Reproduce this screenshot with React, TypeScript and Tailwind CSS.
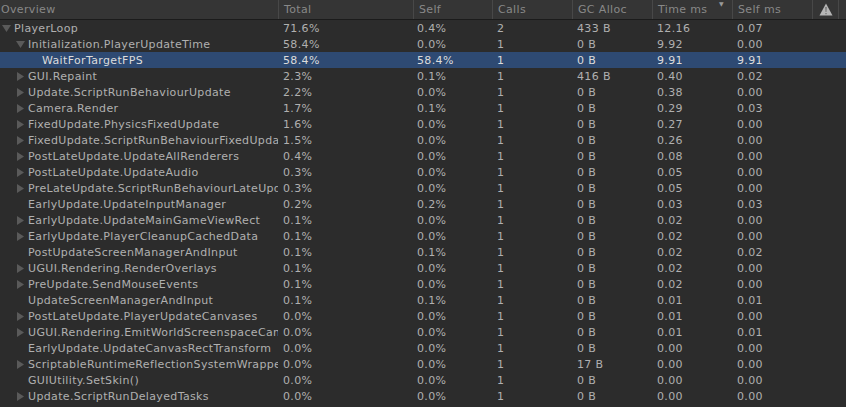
import React from "react";

type Row = {
  name: string;
  depth: number;
  arrow: "open" | "closed" | "none";
  total: string;
  self: string;
  calls: string;
  gc: string;
  time: string;
  selfMs: string;
  selected?: boolean;
};

const rows: Row[] = [
  { name: "PlayerLoop", depth: 0, arrow: "open", total: "71.6%", self: "0.4%", calls: "2", gc: "433 B", time: "12.16", selfMs: "0.07" },
  { name: "Initialization.PlayerUpdateTime", depth: 1, arrow: "open", total: "58.4%", self: "0.0%", calls: "1", gc: "0 B", time: "9.92", selfMs: "0.00" },
  { name: "WaitForTargetFPS", depth: 2, arrow: "none", total: "58.4%", self: "58.4%", calls: "1", gc: "0 B", time: "9.91", selfMs: "9.91", selected: true },
  { name: "GUI.Repaint", depth: 1, arrow: "closed", total: "2.3%", self: "0.1%", calls: "1", gc: "416 B", time: "0.40", selfMs: "0.02" },
  { name: "Update.ScriptRunBehaviourUpdate", depth: 1, arrow: "closed", total: "2.2%", self: "0.0%", calls: "1", gc: "0 B", time: "0.38", selfMs: "0.00" },
  { name: "Camera.Render", depth: 1, arrow: "closed", total: "1.7%", self: "0.1%", calls: "1", gc: "0 B", time: "0.29", selfMs: "0.03" },
  { name: "FixedUpdate.PhysicsFixedUpdate", depth: 1, arrow: "closed", total: "1.6%", self: "0.0%", calls: "1", gc: "0 B", time: "0.27", selfMs: "0.00" },
  { name: "FixedUpdate.ScriptRunBehaviourFixedUpdate", depth: 1, arrow: "closed", total: "1.5%", self: "0.0%", calls: "1", gc: "0 B", time: "0.26", selfMs: "0.00" },
  { name: "PostLateUpdate.UpdateAllRenderers", depth: 1, arrow: "closed", total: "0.4%", self: "0.0%", calls: "1", gc: "0 B", time: "0.08", selfMs: "0.00" },
  { name: "PostLateUpdate.UpdateAudio", depth: 1, arrow: "closed", total: "0.3%", self: "0.0%", calls: "1", gc: "0 B", time: "0.05", selfMs: "0.00" },
  { name: "PreLateUpdate.ScriptRunBehaviourLateUpdate", depth: 1, arrow: "closed", total: "0.3%", self: "0.0%", calls: "1", gc: "0 B", time: "0.05", selfMs: "0.00" },
  { name: "EarlyUpdate.UpdateInputManager", depth: 1, arrow: "none", total: "0.2%", self: "0.2%", calls: "1", gc: "0 B", time: "0.03", selfMs: "0.03" },
  { name: "EarlyUpdate.UpdateMainGameViewRect", depth: 1, arrow: "closed", total: "0.1%", self: "0.0%", calls: "1", gc: "0 B", time: "0.02", selfMs: "0.00" },
  { name: "EarlyUpdate.PlayerCleanupCachedData", depth: 1, arrow: "closed", total: "0.1%", self: "0.0%", calls: "1", gc: "0 B", time: "0.02", selfMs: "0.00" },
  { name: "PostUpdateScreenManagerAndInput", depth: 1, arrow: "none", total: "0.1%", self: "0.1%", calls: "1", gc: "0 B", time: "0.02", selfMs: "0.02" },
  { name: "UGUI.Rendering.RenderOverlays", depth: 1, arrow: "closed", total: "0.1%", self: "0.0%", calls: "1", gc: "0 B", time: "0.02", selfMs: "0.00" },
  { name: "PreUpdate.SendMouseEvents", depth: 1, arrow: "closed", total: "0.1%", self: "0.0%", calls: "1", gc: "0 B", time: "0.02", selfMs: "0.00" },
  { name: "UpdateScreenManagerAndInput", depth: 1, arrow: "none", total: "0.1%", self: "0.1%", calls: "1", gc: "0 B", time: "0.01", selfMs: "0.01" },
  { name: "PostLateUpdate.PlayerUpdateCanvases", depth: 1, arrow: "closed", total: "0.0%", self: "0.0%", calls: "1", gc: "0 B", time: "0.01", selfMs: "0.00" },
  { name: "UGUI.Rendering.EmitWorldScreenspaceCameraGeometry", depth: 1, arrow: "closed", total: "0.0%", self: "0.0%", calls: "1", gc: "0 B", time: "0.01", selfMs: "0.01" },
  { name: "EarlyUpdate.UpdateCanvasRectTransform", depth: 1, arrow: "none", total: "0.0%", self: "0.0%", calls: "1", gc: "0 B", time: "0.00", selfMs: "0.00" },
  { name: "ScriptableRuntimeReflectionSystemWrapper.Update", depth: 1, arrow: "closed", total: "0.0%", self: "0.0%", calls: "1", gc: "17 B", time: "0.00", selfMs: "0.00" },
  { name: "GUIUtility.SetSkin()", depth: 1, arrow: "none", total: "0.0%", self: "0.0%", calls: "1", gc: "0 B", time: "0.00", selfMs: "0.00" },
  { name: "Update.ScriptRunDelayedTasks", depth: 1, arrow: "closed", total: "0.0%", self: "0.0%", calls: "1", gc: "0 B", time: "0.00", selfMs: "0.00" },
];

const cols = "grid grid-cols-[278px_135px_79px_80px_80px_80px_80px_26px_1fr]";
const cell = "h-[16px] overflow-hidden whitespace-nowrap pt-[2px] leading-[14px]";

function Arrow({ kind }: { kind: Row["arrow"] }) {
  if (kind === "none") return <span className="w-[14px] shrink-0" />;
  return (
    <span className="flex h-[14px] w-[14px] shrink-0 items-center">
      {kind === "open" ? (
        <svg width="10" height="8" viewBox="0 0 10 8" className="ml-[2px]">
          <path d="M0 0 H9 L4.5 7 Z" fill="#5a5a5a" />
        </svg>
      ) : (
        <svg width="8" height="10" viewBox="0 0 8 10" className="ml-[3px]">
          <path d="M0 0 L7 4.5 L0 9 Z" fill="#5a5a5a" />
        </svg>
      )}
    </span>
  );
}

function HeaderCell({ label, first, sorted }: { label: string; first?: boolean; sorted?: boolean }) {
  return (
    <div className={`relative flex h-[19px] items-center overflow-hidden whitespace-nowrap pt-[2px] ${first ? "pl-[1px]" : "border-l border-[#484848] pl-[5px]"}`}>
      {label}
      {sorted ? <span className="absolute right-[8px] top-[-1px] text-[6px] text-[#9a9a9a]">▼</span> : null}
    </div>
  );
}

export default function App() {
  return (
    <div className="h-[407px] w-[846px] overflow-hidden bg-[#2c2c2c] text-[11px] tracking-[0.35px] text-[#b0b0b0]" style={{ fontFamily: '"DejaVu Sans", sans-serif' }}>
      <div className={`${cols} h-[20px] border-b border-[#1b1b1b] bg-[#353535] text-[#888888]`}>
        <HeaderCell label="Overview" first />
        <HeaderCell label="Total" />
        <HeaderCell label="Self" />
        <HeaderCell label="Calls" />
        <HeaderCell label="GC Alloc" />
        <HeaderCell label="Time ms" sorted />
        <HeaderCell label="Self ms" />
        <div className="flex items-center justify-center border-l border-[#484848]">
          <svg width="14" height="13" viewBox="0 0 14 13">
            <path d="M7 0.5 L13.5 12.5 H0.5 Z" fill="#b5b5b5" />
            <path d="M6.3 4 H7.7 L7.4 9 H6.6 Z M6.4 10 H7.6 V11.3 H6.4 Z" fill="#6a6a6a" />
          </svg>
        </div>
        <div className="border-l border-[#484848]" />
      </div>
      {rows.map((r) => (
        <div key={r.name} className={`${cols} h-[16px] ${r.selected ? "bg-[#2e4a73] text-[#dcdcdc]" : ""}`}>
          <div className="flex h-[16px] overflow-hidden whitespace-nowrap pr-[1px] pt-[2px] leading-[14px]" style={{ paddingLeft: r.depth * 14 }}>
            <Arrow kind={r.arrow} />
            <span>{r.name}</span>
          </div>
          <div className={`${cell} pl-[5px]`}>{r.total}</div>
          <div className={`${cell} pl-[4px]`}>{r.self}</div>
          <div className={`${cell} pl-[5px]`}>{r.calls}</div>
          <div className={`${cell} pl-[5px]`}>{r.gc}</div>
          <div className={`${cell} pl-[5px]`}>{r.time}</div>
          <div className={`${cell} pl-[5px]`}>{r.selfMs}</div>
          <div />
          <div />
        </div>
      ))}
    </div>
  );
}
